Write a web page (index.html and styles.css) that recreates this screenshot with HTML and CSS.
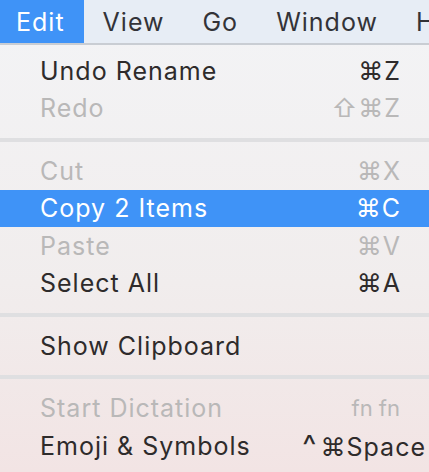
FILE: index.html
```html
<!DOCTYPE html>
<html>
<head>
<meta charset="utf-8">
<link rel="stylesheet" href="styles.css">
</head>
<body>
<div class="menubar">
  <span class="mb-item active">Edit</span>
  <span class="mb-item">View</span>
  <span class="mb-item">Go</span>
  <span class="mb-item">Window</span>
  <span class="mb-item">Help</span>
</div>
<div class="menu">
  <div class="row"><span class="label">Undo Rename</span><span class="key">⌘Z</span></div>
  <div class="row disabled"><span class="label">Redo</span><span class="key">⇧⌘Z</span></div>
  <div class="sep"></div>
  <div class="row disabled"><span class="label">Cut</span><span class="key">⌘X</span></div>
  <div class="row selected"><span class="label">Copy 2 Items</span><span class="key">⌘C</span></div>
  <div class="row disabled"><span class="label">Paste</span><span class="key">⌘V</span></div>
  <div class="row"><span class="label">Select All</span><span class="key">⌘A</span></div>
  <div class="sep"></div>
  <div class="row"><span class="label">Show Clipboard</span><span class="key"></span></div>
  <div class="sep"></div>
  <div class="row disabled"><span class="label">Start Dictation</span><span class="key fn">fn fn</span></div>
  <div class="row"><span class="label">Emoji &amp; Symbols</span><span class="key wide"><span class="ctrl">^</span>⌘Space</span></div>
</div>
</body>
</html>
```
FILE: styles.css
```css
html, body {
  margin: 0;
  padding: 0;
  width: 429px;
  height: 472px;
  overflow: hidden;
  font-family: Inter, "Liberation Sans", sans-serif;
  letter-spacing: 1px;
}
body {
  background: linear-gradient(180deg, #f3f4f6 0%, #f1eded 60%, #f2e4e4 100%);
}
.menubar {
  display: flex;
  height: 43px;
  background: #e7edf5;
  border-bottom: 2px solid #c9cdd3;
  white-space: nowrap;
}
.mb-item {
  display: flex;
  align-items: center;
  padding: 0 19px;
  font-size: 25px;
  color: #333338;
}
.mb-item.active {
  background: #3f93f7;
  color: #fff;
  padding: 0 19px 0 16px;
}
.menu {
  padding-top: 7px;
}
.row {
  display: flex;
  align-items: center;
  justify-content: space-between;
  height: 37.5px;
  padding: 0 29px 0 40px;
  font-size: 25px;
  color: #2e2b2b;
  white-space: nowrap;
}
.row.disabled { color: #b9b8b8; }
.row.selected {
  background: #3f93f7;
  color: #fff;
}
.key { letter-spacing: 1px; margin-right: -1px; }
.key.fn { font-size: 22px; letter-spacing: 0; margin-right: 0; }
.key.wide { margin-right: -26px; }
.ctrl { font-size: 30px; line-height: 1; margin-right: 3px; }
.sep {
  height: 4px;
  margin: 10.5px 0;
  background: #dfdfe1;
}
```
